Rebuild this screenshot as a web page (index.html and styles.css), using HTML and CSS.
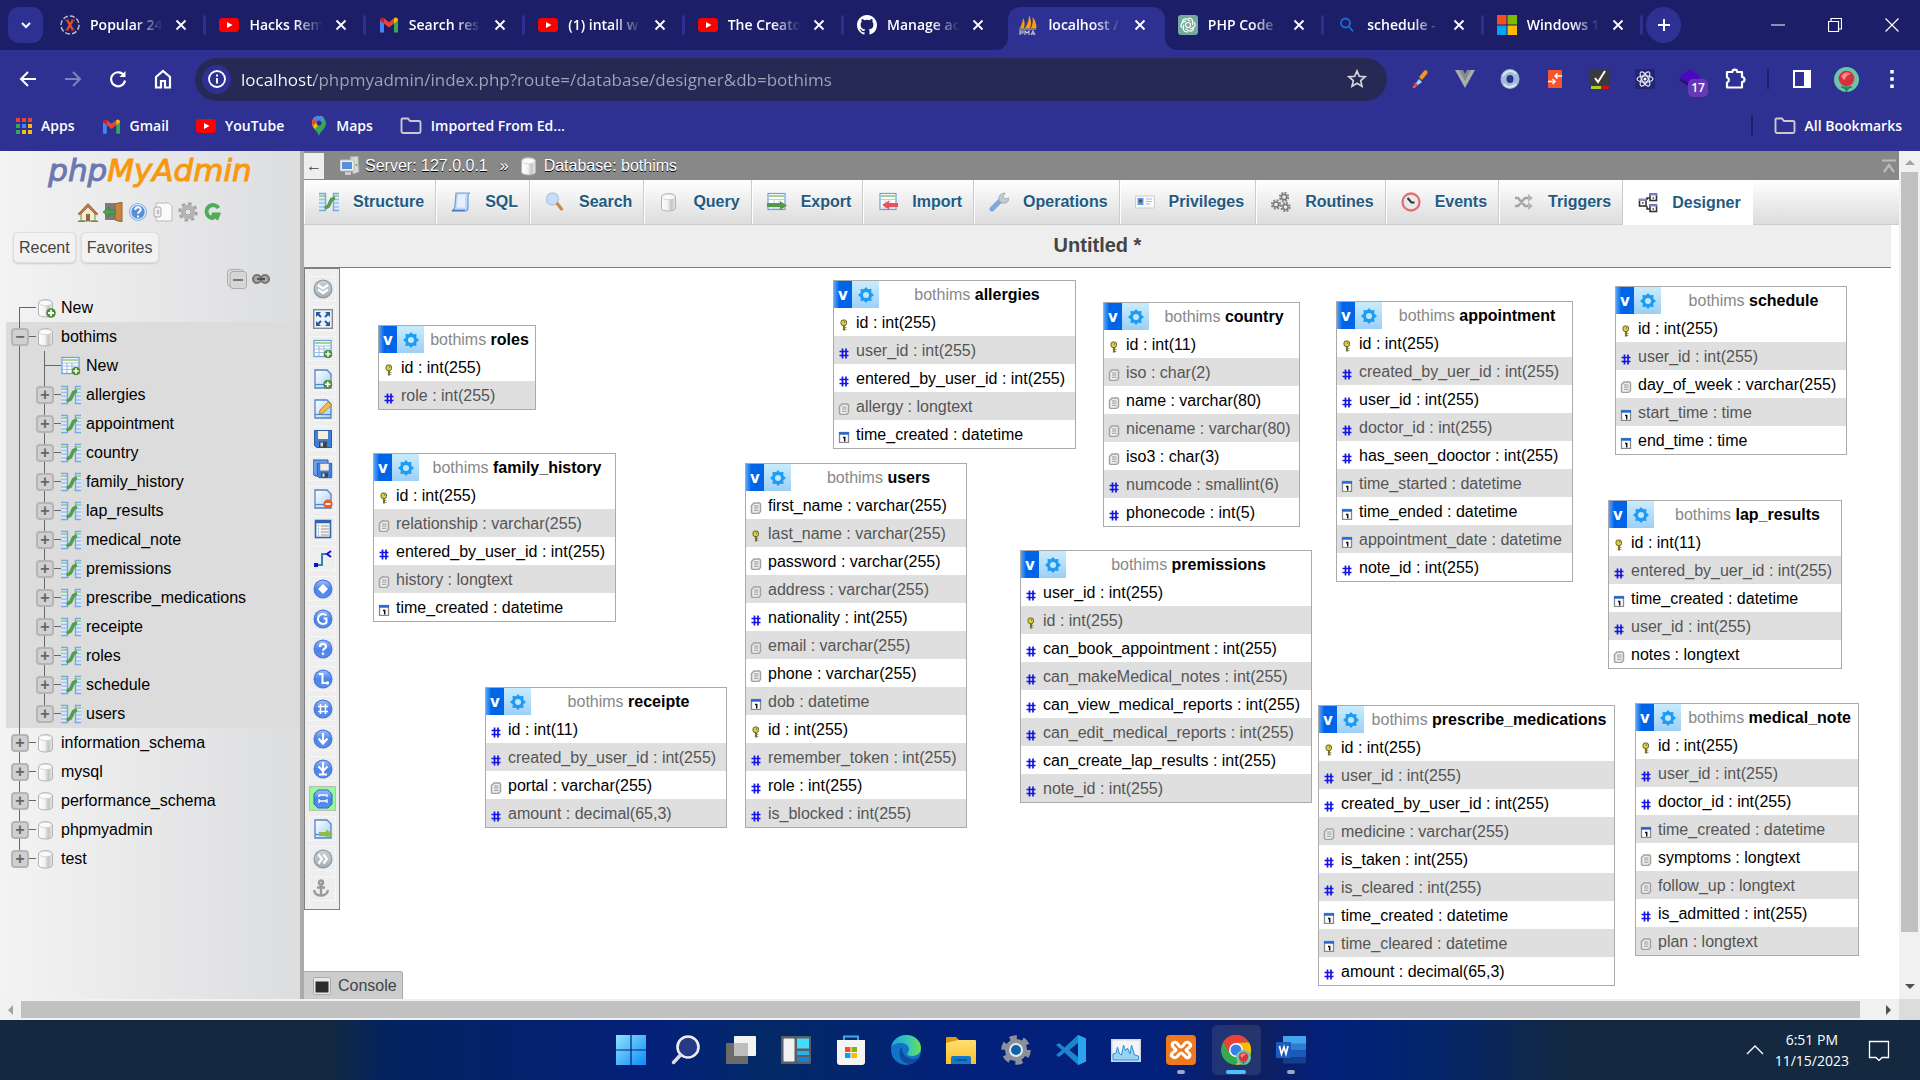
FILE: index.html
```html
<!DOCTYPE html>
<html lang="en">
<head>
<meta charset="utf-8">
<title>localhost / 127.0.0.1 / bothims | phpMyAdmin</title>
<link rel="stylesheet" href="styles.css">
</head>
<body>
<svg class="defs" aria-hidden="true">
  <defs>
    <linearGradient id="g-blue" x1="0" y1="0" x2="0" y2="1"><stop offset="0" stop-color="#9dbdf5"/><stop offset=".5" stop-color="#4b84e8"/><stop offset="1" stop-color="#5b8ff0"/></linearGradient>
    <linearGradient id="g-grey" x1="0" y1="0" x2="0" y2="1"><stop offset="0" stop-color="#c8d2d6"/><stop offset="1" stop-color="#a4b2b8"/></linearGradient>
    <linearGradient id="g-cyl" x1="0" y1="0" x2="1" y2="0"><stop offset="0" stop-color="#fdfdfd"/><stop offset=".45" stop-color="#f2f2f2"/><stop offset=".7" stop-color="#c4c4c4"/><stop offset="1" stop-color="#e9e9e9"/></linearGradient>
    <linearGradient id="g-page" x1="0" y1="0" x2="1" y2="1"><stop offset="0" stop-color="#ffffff"/><stop offset="1" stop-color="#a9cdf4"/></linearGradient>
    <linearGradient id="g-win" x1="0" y1="0" x2="1" y2="1"><stop offset="0" stop-color="#8fe3ff"/><stop offset="1" stop-color="#0a8cf5"/></linearGradient>
    <linearGradient id="g-folder" x1="0" y1="0" x2="0" y2="1"><stop offset="0" stop-color="#ffdf70"/><stop offset="1" stop-color="#fcc02a"/></linearGradient>
    <linearGradient id="g-edge" x1="0" y1="0" x2="1" y2="0"><stop offset="0" stop-color="#1fa3dc"/><stop offset=".6" stop-color="#38c9b4"/><stop offset="1" stop-color="#6be04f"/></linearGradient>
  </defs>
  <symbol id="close" viewBox="0 0 14 14"><path d="M2.500 2.500l9 9M11.500 2.500l-9 9" fill="none" stroke="#fff" stroke-width="1.800"/></symbol>
  <symbol id="youtube" viewBox="0 0 20 20"><rect y="3" width="20" height="14" rx="3.500" fill="#f00"/><path d="M8 7l5.500 3L8 13z" fill="#fff"/></symbol>
  <symbol id="gmail" viewBox="0 0 20 20"><path d="M1 17.500V5l4 3v9.500z" fill="#4285f4"/><path d="M15 17.500V8l4-3v12.500z" fill="#34a853"/><path d="M1 5.500C1 2.500 3.500 2 5 3.200V8.500L1 5.500z" fill="#c5221f"/><path d="M5 3.200l5 4 5-4v5.300l-5 4-5-4z" fill="#ea4335"/><path d="M15 3.200c1.500-1.200 4-.7 4 2.300l-4 3z" fill="#fbbc04"/></symbol>
  <symbol id="xcircle" viewBox="0 0 20 20"><circle cx="10" cy="10" r="9" fill="none" stroke="#b9b9c9" stroke-width="1.500" stroke-dasharray="5 2"/><path d="M7 5l6 10M13 5L7 15" stroke="#e2502c" stroke-width="2.400"/><path d="M5 5h4M11 5h4M5 15h4M11 15h4" stroke="#b33c22" stroke-width="1"/></symbol>
  <symbol id="github" viewBox="0 0 16 16"><path fill="#fff" d="M8 0C3.580 0 0 3.580 0 8c0 3.540 2.290 6.530 5.470 7.590.4.070.55-.17.55-.38 0-.19-.01-.82-.01-1.490-2.010.37-2.530-.49-2.690-.94-.09-.23-.48-.94-.82-1.130-.28-.15-.68-.52-.01-.53.63-.01 1.080.58 1.230.82.72 1.210 1.870.87 2.330.66.070-.52.28-.87.51-1.070-1.780-.2-3.640-.89-3.640-3.950 0-.87.31-1.590.82-2.150-.08-.2-.36-1.020.08-2.120 0 0 .67-.21 2.200.82a7.600 7.600 0 0 1 4 0c1.530-1.040 2.200-.82 2.200-.82.44 1.100.16 1.920.08 2.120.51.56.82 1.270.82 2.150 0 3.070-1.870 3.750-3.650 3.950.29.25.54.73.54 1.480 0 1.070-.01 1.930-.01 2.200 0 .21.15.46.55.38A8.010 8.010 0 0 0 16 8c0-4.420-3.580-8-8-8z"/></symbol>
  <symbol id="pma" viewBox="0 0 20 20"><path d="M2 13C4 9 5 5 5 3c2 3 2 7 1 10zM7 13c3-4 4-9 4-13 2 4 3 9 1 13zM13 13c2-4 2-8 1.500-11 3 3 4 8 4 11z" fill="#f89c0e"/><path d="M1 13h17v2H1z" fill="#8a7a6a"/><path d="M2 20v-4h3v2H2M7 20v-4l2 2 2-2v4M13 20l2-4 2 4M14 19h3" fill="none" stroke="#c9c9d5" stroke-width="1.100"/></symbol>
  <symbol id="gpt" viewBox="0 0 20 20"><rect width="20" height="20" rx="3" fill="#74aa9c"/><g fill="none" stroke="#fff" stroke-width="1.200"><path d="M10 3.500a3 3 0 0 1 4.500 2.300v4.500M15.500 7a3 3 0 0 1 .5 5l-4 2.300M15.500 13a3 3 0 0 1-4 3l-4-2.200M10 16.500a3 3 0 0 1-4.500-2.300V9.700M4.500 13A3 3 0 0 1 4 8l4-2.300M4.500 7a3 3 0 0 1 4-3l4 2.200"/><circle cx="10" cy="10" r="2.500"/></g></symbol>
  <symbol id="find" viewBox="0 0 20 20"><circle cx="8.500" cy="8" r="4.500" fill="none" stroke="#1473d0" stroke-width="1.800"/><path d="M12 11.500l4 5" stroke="#1473d0" stroke-width="2"/></symbol>
  <symbol id="msft" viewBox="0 0 20 20"><path fill="#f25022" d="M0 0h9.500v9.500H0z"/><path fill="#7fba00" d="M10.500 0H20v9.500h-9.500z"/><path fill="#00a4ef" d="M0 10.500h9.500V20H0z"/><path fill="#ffb900" d="M10.500 10.500H20V20h-9.500z"/></symbol>
  <symbol id="folder-o" viewBox="0 0 22 18"><path d="M1.500 2.500a1 1 0 0 1 1-1h5.500l2 2.500h9a1.500 1.500 0 0 1 1.500 1.500v9a1.500 1.500 0 0 1-1.500 1.500h-16a1.500 1.500 0 0 1-1.500-1.500z" fill="none" stroke="#c9c9cf" stroke-width="1.900"/></symbol>
  <symbol id="tulip" viewBox="0 0 24 24"><circle cx="12" cy="12" r="12" fill="#6fc3ab"/><path d="M12 17v7M12 22c-2-3-4-3-5-3M12 22c2-3 4-3 5-3" stroke="#1f8a4a" stroke-width="1.600" fill="none"/><circle cx="12" cy="11" r="7.500" fill="#d8313b"/><path d="M7 9c2-4 7-5 9-2-3 0-5 3-6 6" fill="#f58a90"/></symbol>

  <symbol id="db" viewBox="0 0 20 20"><path d="M2.500 5v11c0 4 14 4 14 0V5c0-4.500-14-4.500-14 0z" fill="url(#g-cyl)" stroke="#b4b4b4"/><ellipse cx="9.500" cy="5" rx="6.500" ry="2.700" fill="#fafafa" stroke="#ccc" stroke-width=".7"/></symbol>
  <symbol id="plus-badge" viewBox="0 0 10 10"><circle cx="5" cy="5" r="4.800" fill="#4c8d34"/><path d="M5 2v6M2 5h6" stroke="#fff" stroke-width="1.800"/></symbol>
  <symbol id="db-new" viewBox="0 0 20 20"><use href="#db" width="20" height="20"/><use href="#plus-badge" x="10" y="10" width="10" height="10"/></symbol>
  <symbol id="grid-new" viewBox="0 0 20 20"><rect x="1" y="1.500" width="17" height="16" fill="#fff" stroke="#6f9fdc" stroke-width="1.300"/><path d="M2 4h15" stroke="#a6d68c" stroke-width="2"/><path d="M2 7h15M2 10h15M2 13.500h15M6 7v10M11 7v10" stroke="#9fc0ea" stroke-width="1.200"/><use href="#plus-badge" x="10.500" y="10.500" width="9" height="9"/></symbol>
  <symbol id="struct" viewBox="0 0 20 20"><rect x="0" y="1" width="7" height="18" fill="#dcebfc"/><rect x="14" y="1" width="6" height="18" fill="#dcebfc"/><path d="M0 4h6M15 4h5" stroke="#8ccb78" stroke-width="1.500"/><path d="M0 1.500h6.500v17H0M20 1.500h-5.500v17h5.500" stroke="#78a6e0" stroke-width="1.400" fill="none"/><path d="M0 7.500h6M0 11h6M0 15h6M15 7.500h5M15 11h5M15 15h5" stroke="#9cc0ec" stroke-width="1.300"/><path d="M7 15.500l2.500-1.500 3-6.500 2-1" stroke="#4fa04a" stroke-width="3.600" fill="none" stroke-linecap="round"/></symbol>
  <symbol id="home" viewBox="0 0 20 20"><path d="M3 11v8h14v-8l-7-7z" fill="#f7ead7" stroke="#7a8a55"/><path d="M0 12L10 1.500 20 12l-2 1L10 5 2 13z" fill="#b9793e" stroke="#8d5727" stroke-width=".6"/><rect x="8" y="12" width="4" height="7" fill="#8a6a4a"/><path d="M0 19.300h7M13 19.300h7" stroke="#5a9a3a" stroke-width="1.500"/></symbol>
  <symbol id="exit" viewBox="0 0 20 20"><rect x="2" y="1" width="15" height="17" fill="#7c7c7c"/><path d="M12 2l7-2v20l-7-2z" fill="#c8853f" stroke="#93602c"/><path d="M0 10l6-5v3h6v4H6v3z" fill="#4fa350" stroke="#2f7a33" stroke-width=".7"/></symbol>
  <symbol id="help" viewBox="0 0 20 20"><circle cx="10" cy="10" r="9" fill="#8fb3e2"/><circle cx="10" cy="10" r="7.300" fill="#5a8fd6" stroke="#dbe8f8" stroke-width="1.300"/><path d="M7.300 8c0-3.600 5.400-3.600 5.400-.3 0 1.900-2.700 2-2.700 4M10 13.500v2" stroke="#fff" stroke-width="1.900" fill="none"/></symbol>
  <symbol id="docs" viewBox="0 0 20 20"><path d="M3 1h13l3 3v15H3z" fill="#fbfbfb" stroke="#bbb"/><rect x="1" y="5" width="7" height="10" rx="2" fill="#eee" stroke="#aaa"/><path d="M5 8v4" stroke="#888"/></symbol>
  <symbol id="gear" viewBox="0 0 20 20"><circle cx="10" cy="10" r="8" fill="none" stroke="#a2a2a2" stroke-width="3.500" stroke-dasharray="3.140 3.140"/><circle cx="10" cy="10" r="5.500" fill="none" stroke="#b4b4b4" stroke-width="4"/><circle cx="10" cy="10" r="3" fill="#e8e8e8" stroke="#999"/></symbol>
  <symbol id="refresh" viewBox="0 0 20 20"><path d="M15.500 6A6.500 6.500 0 1 0 11 16" fill="none" stroke="#52ab58" stroke-width="4"/><path d="M9 10.500h9l-3 8-7-4z" fill="#52ab58"/></symbol>
  <symbol id="collapse" viewBox="0 0 20 20"><rect x=".5" y=".5" width="16" height="17" rx="3" fill="#ddd" stroke="#aaa"/><rect x="3" y="2.500" width="16.500" height="17" rx="3" fill="#d6d6d6" stroke="#aaa"/><path d="M6 11h10" stroke="#777" stroke-width="2"/></symbol>
  <symbol id="chain" viewBox="0 0 20 20"><rect x="2" y="6" width="8" height="8" rx="4" fill="#aaa" stroke="#777" stroke-width="2.200"/><rect x="10" y="6" width="8" height="8" rx="4" fill="#aaa" stroke="#777" stroke-width="2.200"/><path d="M6 10h8" stroke="#555" stroke-width="2.200"/></symbol>
  <symbol id="server" viewBox="0 0 20 20"><path d="M10 1l8-1 1 16-6 2z" fill="#d9d9d9" stroke="#aaa"/><rect x="0" y="4" width="14" height="11" rx="1" fill="#eee" stroke="#bbb"/><rect x="2" y="6" width="10" height="7" fill="#5b8edb"/><path d="M5 17.500h6" stroke="#ccc" stroke-width="3"/><circle cx="16.500" cy="9" r="1" fill="#4b4"/></symbol>
  <symbol id="sql" viewBox="0 0 20 20"><path d="M5 1h14c-2 0-2 2-2 5v8c0 3 0 4-2 5H1c2-1 3-3 3-6z" fill="#bdd8f8" stroke="#6f9fdc" stroke-width="1.200"/><path d="M7 2.500h8l-1 4v9H5.500z" fill="#e6f1fd"/><path d="M1 18.500h13" stroke="#4a7cc0" stroke-width="1.600"/></symbol>
  <symbol id="mag" viewBox="0 0 20 20"><circle cx="7.500" cy="7" r="6" fill="#c4defb" stroke="#b3c6e2" stroke-width="1.500"/><path d="M12.500 12l4 5" stroke="#c98a45" stroke-width="3.200" stroke-linecap="round"/></symbol>
  <symbol id="export" viewBox="0 0 20 20"><rect x="1" y="1.500" width="17" height="16" fill="#fff" stroke="#6f9fdc" stroke-width="1.200"/><path d="M2 4h15" stroke="#a6d68c" stroke-width="2"/><path d="M2 7.500h15M2 16h15M7 8v9M12 8v9" stroke="#b4cdee"/><path d="M0 11h13V9l7 4.500-7 4.500v-3H0z" fill="#55984a"/></symbol>
  <symbol id="import" viewBox="0 0 20 20"><rect x="2" y="1.500" width="16" height="16" fill="#fff" stroke="#6f9fdc" stroke-width="1.200"/><path d="M3 4h14" stroke="#a6d68c" stroke-width="2"/><path d="M3 7.500h14M3 16h14M7 8v9M12 8v9" stroke="#b4cdee"/><path d="M20 11h-9V8.500L4 13l7 4.500V15h9z" fill="#e8525c"/></symbol>
  <symbol id="wrench" viewBox="0 0 20 20"><path d="M3 17L12 8" stroke="#7fa6e4" stroke-width="5" stroke-linecap="round"/><path d="M10 9c-1-5 2-8 6-8l-2 4 2 2 4-1c0 4-3 6-7 5z" fill="#c4cad3" stroke="#969ca6" stroke-width=".7"/></symbol>
  <symbol id="card" viewBox="0 0 20 20"><rect x=".5" y="4" width="19" height="12" rx="1" fill="#fafafa" stroke="#ccc"/><rect x="2.500" y="6" width="6" height="7" fill="#5d9be4"/><circle cx="5.500" cy="9" r="1.800" fill="#7a4d2a"/><path d="M11 7h6M11 9.500h6M11 12h4" stroke="#9dc0ec"/></symbol>
  <symbol id="cogs" viewBox="0 0 20 20"><g fill="none" stroke="#888" stroke-width="2" stroke-dasharray="2 1.300"><circle cx="13" cy="5" r="4.200"/><circle cx="5" cy="12.500" r="4.200"/><circle cx="14.500" cy="15" r="4.200"/></g><g fill="#eee" stroke="#777" stroke-width="1.500"><circle cx="13" cy="5" r="2.600"/><circle cx="5" cy="12.500" r="2.600"/><circle cx="14.500" cy="15" r="2.600"/></g></symbol>
  <symbol id="clock" viewBox="0 0 20 20"><circle cx="10" cy="10" r="8.500" fill="#e9e9e9" stroke="#e27070" stroke-width="2.300"/><path d="M6.500 6l4 4.500h3" stroke="#333" stroke-width="2" fill="none"/></symbol>
  <symbol id="trigger" viewBox="0 0 20 20"><path d="M1 6h3l7 8h4M1 14h3l7-8h4" stroke="#a5a5a5" stroke-width="2.600" fill="none"/><path d="M14 2l5 4-5 4zM14 10l5 4-5 4z" fill="#b5b5b5"/></symbol>
  <symbol id="design" viewBox="0 0 20 20"><path d="M9 7V5h3M9 13v3h3" stroke="#333" stroke-width="1.500" fill="none"/><g fill="#fff" stroke="#333" stroke-width="1.600"><rect x="1.500" y="6.500" width="6.500" height="6.500"/><rect x="12" y="1" width="6.500" height="6.500"/><rect x="12" y="12" width="6.500" height="6.500"/></g><path d="M11.500 1.500h7.500M1 7h7.500M11.500 12.500h7.500" stroke="#8088e0" stroke-width="2.200"/><path d="M4 10h1.500M14.500 5H16M14.500 16H16" stroke="#333" stroke-width="1.500"/></symbol>

  <symbol id="ball" viewBox="0 0 20 20"><circle cx="10" cy="10" r="9.500" fill="#4a78dc"/><circle cx="10" cy="10" r="8.300" fill="url(#g-blue)"/></symbol>
  <symbol id="gball" viewBox="0 0 20 20"><circle cx="10" cy="10" r="9.500" fill="#8b9ba1"/><circle cx="10" cy="10" r="8.300" fill="url(#g-grey)"/></symbol>
  <symbol id="t-more" viewBox="0 0 20 20"><use href="#gball"/><path d="M5 6l5 3.500L15 6M5 10.500l5 3.500 5-3.500" fill="none" stroke="#fff" stroke-width="2.300"/></symbol>
  <symbol id="t-full" viewBox="0 0 20 20"><rect x=".7" y=".7" width="18.600" height="18.600" fill="#eaf2fb" stroke="#8a8a8a" stroke-width="1.400"/><path d="M3 3h5L3 8zM17 3h-5l5 5zM3 17h5l-5-5zM17 17h-5l5-5z" fill="#24589e"/><path d="M5 5l3 3M15 5l-3 3M5 15l3-3M15 15l-3-3" stroke="#24589e" stroke-width="2"/></symbol>
  <symbol id="page" viewBox="0 0 20 20"><path d="M2 1h12l4 4v14H2z" fill="url(#g-page)" stroke="#4f86c6" stroke-width="1.300"/><path d="M2 15.500h16" stroke="#4f86c6" stroke-width="1.200"/></symbol>
  <symbol id="t-new" viewBox="0 0 20 20"><use href="#page"/><use href="#plus-badge" x="10" y="10.500" width="9.500" height="9.500"/></symbol>
  <symbol id="t-edit" viewBox="0 0 20 20"><use href="#page"/><path d="M6 15l1-4 8-8 4 3-9 8z" fill="#f2bb4b" stroke="#b07a2a" stroke-width=".8"/></symbol>
  <symbol id="t-save" viewBox="0 0 20 20"><path d="M1.500 1.500h17v17h-15l-2-2z" fill="#3f7fd8" stroke="#2a5ba8"/><rect x="5" y="2" width="10" height="8" fill="#f6efdc"/><rect x="6" y="12.500" width="8" height="6" fill="#3a4756"/><rect x="7.500" y="13.500" width="2.500" height="4" fill="#cfd8e0"/></symbol>
  <symbol id="t-saveas" viewBox="0 0 20 20"><path d="M0 1h15v16H2l-2-2z" fill="#6ba0ea" stroke="#2a5ba8"/><use href="#t-save" x="3" y="3" width="17" height="17"/></symbol>
  <symbol id="t-del" viewBox="0 0 20 20"><use href="#page"/><circle cx="15" cy="15" r="4.600" fill="#e2602c"/><path d="M12.500 15h5" stroke="#fff" stroke-width="1.800"/></symbol>
  <symbol id="t-list" viewBox="0 0 20 20"><rect x="2.500" y="1.500" width="15" height="17" fill="#f5f5f0" stroke="#2f66b0" stroke-width="1.600"/><path d="M2 3h16" stroke="#2f66b0" stroke-width="2.500"/><path d="M8 7h8M8 10h8M8 13h8M8 16h8" stroke="#999"/><path d="M5 7h1M5 10h1M5 13h1M5 16h1" stroke="#4a86d0"/></symbol>
  <symbol id="t-rel" viewBox="0 0 20 20"><path d="M3 16h6V5h6" fill="none" stroke="#2f86b4" stroke-width="2"/><rect x="1" y="14" width="4" height="4" fill="#11c"/><path d="M18 2l-4 3 4 3" fill="none" stroke="#11c" stroke-width="2"/></symbol>
  <symbol id="t-fk" viewBox="0 0 20 20"><use href="#ball"/><path d="M10 5l5 5-5 5-5-5z" fill="#fff"/></symbol>
  <symbol id="t-reload" viewBox="0 0 20 20"><use href="#ball"/><path d="M13.500 6.500a5 5 0 1 0 0 7v-4h-3" fill="none" stroke="#fff" stroke-width="2"/></symbol>
  <symbol id="t-help" viewBox="0 0 20 20"><use href="#ball"/><path d="M7 8c0-4 6-4 6-.3 0 2-3 2-3 4M10 13.500v2.200" stroke="#fff" stroke-width="2.200" fill="none"/></symbol>
  <symbol id="t-ang" viewBox="0 0 20 20"><use href="#ball"/><path d="M6 5h3.500v9H14" stroke="#fff" stroke-width="2" fill="none"/><circle cx="14.500" cy="14" r="1.700" fill="#fff"/></symbol>
  <symbol id="t-snap" viewBox="0 0 20 20"><use href="#ball"/><path d="M7.500 5v10M12.500 5v10M5 7.500h10M5 12.500h10" stroke="#fff" stroke-width="1.600"/></symbol>
  <symbol id="t-down" viewBox="0 0 20 20"><use href="#ball"/><path d="M10 4v10M5.500 9.500l4.500 5 4.500-5" stroke="#fff" stroke-width="2.200" fill="none"/></symbol>
  <symbol id="t-down2" viewBox="0 0 20 20"><use href="#ball"/><path d="M10 3v8M5.500 7.500l4.500 4.500 4.500-4.500M6 15.500h8M10 11v4" stroke="#fff" stroke-width="2.200" fill="none"/></symbol>
  <symbol id="t-text" viewBox="0 0 20 20"><path d="M5 1h10l4 4v10l-4 4H5l-4-4V5z" fill="url(#g-blue)" stroke="#3564c0"/><path d="M6 8V6h8v2M6 12h8M6 10v4M14 10v4" stroke="#fff" stroke-width="1.300" fill="none"/></symbol>
  <symbol id="t-export" viewBox="0 0 20 20"><use href="#page"/><path d="M6 13h7v-2.500l7 4.500-7 4.500V17H6z" fill="#8fb94a"/></symbol>
  <symbol id="t-right" viewBox="0 0 20 20"><use href="#gball"/><path d="M5.500 5.500L9 10l-3.500 4.500M10.500 5.500L14 10l-3.500 4.500" fill="none" stroke="#fff" stroke-width="2.200"/></symbol>
  <symbol id="t-anchor" viewBox="0 0 20 20"><g fill="none" stroke="#999" stroke-width="2.400"><circle cx="8" cy="3.500" r="2"/><path d="M8 5.500V17M4 8.500h8M1 11c1 7.500 13 7.500 14 0"/></g></symbol>

  <symbol id="key" viewBox="0 0 12 12"><rect x="3" y="1" width="5.500" height="5.500" rx="2" fill="#d8cf3a" stroke="#66642a"/><path d="M6 6.500v5" stroke="#77742a" stroke-width="2.200"/><path d="M7 8.500h1.500M7 10.500h1.500" stroke="#999"/><path d="M6 3h1" stroke="#444"/></symbol>
  <symbol id="num" viewBox="0 0 12 12"><path d="M4.500 1.500v10M8 1.500v10M1.500 4.500h9M1.500 8.500h9" stroke="#1414e6" stroke-width="1.700"/></symbol>
  <symbol id="txt" viewBox="0 0 12 12"><path d="M4 1h5.500l1 1v7.500L8.500 11.500h-6l-1-1V3.500z" fill="#eee" stroke="#a2a2a2" stroke-width="1.500"/><path d="M4 4h4.500M4 6h4.500M4 8.300h4.500" stroke="#999"/></symbol>
  <symbol id="date" viewBox="0 0 12 12"><rect x="1.500" y="1.500" width="9" height="10" fill="#fff" stroke="#888" stroke-width="1.300"/><path d="M1 2.500h10" stroke="#1f66dc" stroke-width="2.400"/><path d="M5 6.500h1.700v4" stroke="#111" stroke-width="1.500" fill="none"/></symbol>
  <symbol id="cog" viewBox="0 0 16 16"><path d="M8 0l2 2.300 3.500-.3-.3 3.500L16 8l-2.800 2.500.3 3.500-3.500-.3L8 16l-2-2.300-3.500.3.300-3.500L0 8l2.800-2.500L2.500 2l3.500.3z" fill="#1e9bf2"/><circle cx="8" cy="8" r="3" fill="#bfe6fb"/></symbol>
</svg>

<header class="browser">
  <div class="tabstrip">
    <button class="tab-search" aria-label="Search tabs"><svg width="14" height="14" viewBox="0 0 14 14"><path d="M3 5l4 4 4-4" fill="none" stroke="#fff" stroke-width="2"/></svg></button>
    <div class="tabs" role="tablist">
      <div class="tab" role="tab"><svg class="i20"><use href="#xcircle"/></svg><span>Popular 24</span><button aria-label="Close"><svg><use href="#close"/></svg></button></div>
      <div class="tab" role="tab"><svg class="i20"><use href="#youtube"/></svg><span>Hacks Rem</span><button aria-label="Close"><svg><use href="#close"/></svg></button></div>
      <div class="tab" role="tab"><svg class="i20"><use href="#gmail"/></svg><span>Search res</span><button aria-label="Close"><svg><use href="#close"/></svg></button></div>
      <div class="tab" role="tab"><svg class="i20"><use href="#youtube"/></svg><span>(1) intall w</span><button aria-label="Close"><svg><use href="#close"/></svg></button></div>
      <div class="tab" role="tab"><svg class="i20"><use href="#youtube"/></svg><span>The Creato</span><button aria-label="Close"><svg><use href="#close"/></svg></button></div>
      <div class="tab nosep" role="tab"><svg class="i20"><use href="#github"/></svg><span>Manage ac</span><button aria-label="Close"><svg><use href="#close"/></svg></button></div>
      <div class="tab active nosep" role="tab" aria-selected="true"><svg class="i20"><use href="#pma"/></svg><span>localhost /</span><button aria-label="Close"><svg><use href="#close"/></svg></button></div>
      <div class="tab" role="tab"><svg class="i20"><use href="#gpt"/></svg><span>PHP Code</span><button aria-label="Close"><svg><use href="#close"/></svg></button></div>
      <div class="tab" role="tab"><svg class="i20"><use href="#find"/></svg><span>schedule -</span><button aria-label="Close"><svg><use href="#close"/></svg></button></div>
      <div class="tab" role="tab"><svg class="i20"><use href="#msft"/></svg><span>Windows 1</span><button aria-label="Close"><svg><use href="#close"/></svg></button></div>
    </div>
    <button class="tab-new" aria-label="New tab"><svg width="14" height="14" viewBox="0 0 14 14"><path d="M7 1v12M1 7h12" stroke="#fff" stroke-width="2"/></svg></button>
    <div class="winctl">
      <button aria-label="Minimize"><svg width="14" height="14" viewBox="0 0 14 14"><path d="M0 7h14" stroke="#fff"/></svg></button>
      <button aria-label="Restore"><svg width="14" height="14" viewBox="0 0 14 14"><path d="M.5 3.500h10v10H.5zM3 3V.5h10.500V11H11" fill="none" stroke="#fff" stroke-width="1.200"/></svg></button>
      <button aria-label="Close window"><svg width="14" height="14" viewBox="0 0 14 14"><path d="M.5.5l13 13M13.500.5l-13 13" stroke="#fff" stroke-width="1.200"/></svg></button>
    </div>
  </div>

  <div class="toolbar">
    <nav class="navbtns">
      <button aria-label="Back"><svg width="20" height="20" viewBox="0 0 20 20"><path d="M10 3l-7 7 7 7M3 10h15" fill="none" stroke="#fff" stroke-width="2"/></svg></button>
      <button aria-label="Forward"><svg width="20" height="20" viewBox="0 0 20 20"><path d="M10 3l7 7-7 7M17 10H2" fill="none" stroke="#7f81c2" stroke-width="2"/></svg></button>
      <button aria-label="Reload"><svg width="20" height="20" viewBox="0 0 20 20"><path d="M16 6.500a7 7 0 1 0 1 5" fill="none" stroke="#fff" stroke-width="2.200"/><path d="M17.500 2v6h-6z" fill="#fff"/></svg></button>
      <button aria-label="Home"><svg width="20" height="20" viewBox="0 0 20 20"><path d="M3 8l7-6 7 6v10.500h-5V12H8v6.500H3z" fill="none" stroke="#fff" stroke-width="2.200"/></svg></button>
    </nav>
    <div class="omnibox">
      <button class="info" aria-label="Site information"><svg width="20" height="20" viewBox="0 0 20 20"><circle cx="10" cy="10" r="8" fill="none" stroke="#fff" stroke-width="1.800"/><path d="M10 9v5.500M10 5.500v2" stroke="#fff" stroke-width="2"/></svg></button>
      <input type="text" aria-label="Address" value="localhost/phpmyadmin/index.php?route=/database/designer&amp;db=bothims">
      <button aria-label="Bookmark this tab"><svg width="20" height="20" viewBox="0 0 20 20"><path d="M10 2l2.300 5.300 5.700.5-4.300 3.800 1.300 5.700-5-3-5 3 1.300-5.700L2 7.800l5.700-.5z" fill="none" stroke="#d5d5dd" stroke-width="1.700"/></svg></button>
    </div>
    <div class="exts">
      <button aria-label="Color picker"><svg width="20" height="20" viewBox="0 0 20 20"><path d="M3 18l6-8 3 3-8 6z" fill="#9fd4f5"/><path d="M2 19l3-6 3 3z" fill="#e8343c"/><path d="M9 8l5-6c2-2 5 1 3 3l-5 6z" fill="#f49a12"/></svg></button>
      <button aria-label="Vue devtools"><svg width="20" height="20" viewBox="0 0 20 20"><path d="M0 1h5l5 9 5-9h5L10 19z" fill="#a9adaf"/><path d="M4 1h4l2 4 2-4h4l-6 11z" fill="#878b90"/></svg></button>
      <button aria-label="Session"><svg width="20" height="20" viewBox="0 0 20 20"><ellipse cx="10" cy="10" rx="6.500" ry="7" fill="none" stroke="#9fbcd6" stroke-width="6"/><path d="M3 7c3-6 10-6 13-2M4 15c3 4 8 4 12 0" stroke="#dbe8f2" stroke-width="1.800" fill="none"/></svg></button>
      <button aria-label="Redirects"><svg width="20" height="20" viewBox="0 0 20 20"><rect x="3" y="1" width="14" height="18" rx="1" fill="#f6552c"/><path d="M10 7h7M12.500 4.500L10 7l2.500 2.500M3 12.500h7M7.500 10l2.500 2.500L7.500 15" stroke="#fff" stroke-width="1.500" fill="none"/></svg></button>
      <button aria-label="Checker"><svg width="20" height="20" viewBox="0 0 20 20"><rect width="20" height="16" rx="2" fill="#3a3a3a"/><path d="M5 9l3 4 7-11" stroke="#fff" stroke-width="2" fill="none"/><path d="M1 17h10v3H1z" fill="#a6d21a"/><path d="M11 17h8v3h-8z" fill="#c3161c"/></svg></button>
      <button aria-label="React devtools"><svg width="20" height="20" viewBox="0 0 20 20"><rect width="20" height="20" rx="2" fill="#22256f"/><g fill="none" stroke="#e5e5f5" stroke-width="1.200"><ellipse cx="10" cy="10" rx="8" ry="3.200"/><ellipse cx="10" cy="10" rx="8" ry="3.200" transform="rotate(60 10 10)"/><ellipse cx="10" cy="10" rx="8" ry="3.200" transform="rotate(120 10 10)"/></g><circle cx="10" cy="10" r="1.500" fill="#fff"/></svg></button>
      <button class="badged" aria-label="Extension, 17 items"><svg width="22" height="20" viewBox="0 0 22 20"><path d="M11 4l11 7-11 7L0 11z" fill="#2a0f78"/><path d="M11 0l11 8-11 7L0 8z" fill="#4b06c0"/></svg><span class="badge">17</span></button>
      <button aria-label="Extensions"><svg width="22" height="22" viewBox="0 0 22 22"><path d="M3 4h5.500a2.300 2.300 0 0 1 4.600 0H18v5a2.300 2.300 0 0 1 0 5v5.500H3V14.500a2.600 2.600 0 0 0 0-5z" fill="none" stroke="#fff" stroke-width="2.200" stroke-linejoin="round"/></svg></button>
      <i class="vsep"></i>
      <button aria-label="Side panel"><svg width="20" height="20" viewBox="0 0 20 20"><path d="M2 2h16v16H2z" fill="none" stroke="#fff" stroke-width="2"/><path d="M12 2h6v16h-6z" fill="#fff"/></svg></button>
      <button aria-label="Profile"><svg width="25" height="25"><use href="#tulip"/></svg></button>
      <button aria-label="Menu"><svg width="20" height="20" viewBox="0 0 20 20"><path d="M10 1v3.500M10 8.200v3.500M10 15.500V19" stroke="#fff" stroke-width="3.500"/></svg></button>
    </div>
  </div>

  <nav class="bookmarks">
    <a href="#"><svg width="16" height="16" viewBox="0 0 16 16"><path d="M0 0h4v4H0zM6 0h4v4H6zM12 0h4v4h-4z" fill="#ea4335"/><path d="M0 6h4v4H0zM0 12h4v4H0z" fill="#34a853"/><path d="M6 6h4v4H6z" fill="#4285f4"/><path d="M12 6h4v4h-4zM6 12h4v4H6zM12 12h4v4h-4z" fill="#fbbc04"/></svg>Apps</a>
    <a href="#"><svg width="19" height="19"><use href="#gmail"/></svg>Gmail</a>
    <a href="#"><svg width="20" height="20"><use href="#youtube"/></svg>YouTube</a>
    <a href="#"><svg width="16" height="20" viewBox="0 0 16 20"><path d="M8 20C7 15 1 13 1 7a7 7 0 0 1 14 0c0 6-6 8-7 13z" fill="#34a853"/><path d="M1 7a7 7 0 0 1 12-5L4 13C2 11 1 9 1 7z" fill="#fbbc04"/><path d="M2.500 2.500A7 7 0 0 1 13 2.200L8 8z" fill="#4285f4"/><path d="M2.500 2.500L6 5.500 2 10C.5 7 1 4 2.500 2.500z" fill="#ea4335"/><circle cx="8" cy="7" r="2.500" fill="#2e3192"/></svg>Maps</a>
    <a href="#"><svg width="22" height="18"><use href="#folder-o"/></svg>Imported From Ed...</a>
    <i class="vsep push"></i>
    <a href="#"><svg width="22" height="18"><use href="#folder-o"/></svg>All Bookmarks</a>
  </nav>
</header>

<div class="viewport">
  <div class="page">
    <aside class="sidebar">
      <a class="logo" href="#"><span>php</span>MyAdmin</a>
      <nav class="quick">
        <a href="#" aria-label="Home"><svg class="i20"><use href="#home"/></svg></a>
        <a href="#" aria-label="Log out"><svg class="i20"><use href="#exit"/></svg></a>
        <a href="#" aria-label="Documentation"><svg class="i20"><use href="#help"/></svg></a>
        <a href="#" aria-label="Manual"><svg class="i20"><use href="#docs"/></svg></a>
        <a href="#" aria-label="Settings"><svg class="i20"><use href="#gear"/></svg></a>
        <a href="#" aria-label="Reload"><svg class="i20"><use href="#refresh"/></svg></a>
      </nav>
      <div class="recent"><button>Recent</button><button>Favorites</button></div>
      <div class="treectl"><a href="#" aria-label="Collapse all"><svg class="i20"><use href="#collapse"/></svg></a><a href="#" aria-label="Link with main panel"><svg class="i20"><use href="#chain"/></svg></a></div>
      <ul class="tree">
        <li><div class="node"><i class="rail first"></i><svg class="i20"><use href="#db-new"/></svg><a href="#">New</a></div></li>
        <li class="open"><div class="node"><i class="rail"><button aria-label="Collapse">−</button></i><svg class="i20"><use href="#db"/></svg><a href="#">bothims</a></div>
          <ul>
            <li class="node"><i class="line"></i><i class="rail"></i><svg class="i20"><use href="#grid-new"/></svg><a href="#">New</a></li>
            <li class="node"><i class="line"></i><i class="rail"><button aria-label="Expand">+</button></i><svg class="i20"><use href="#struct"/></svg><a href="#">allergies</a></li>
            <li class="node"><i class="line"></i><i class="rail"><button aria-label="Expand">+</button></i><svg class="i20"><use href="#struct"/></svg><a href="#">appointment</a></li>
            <li class="node"><i class="line"></i><i class="rail"><button aria-label="Expand">+</button></i><svg class="i20"><use href="#struct"/></svg><a href="#">country</a></li>
            <li class="node"><i class="line"></i><i class="rail"><button aria-label="Expand">+</button></i><svg class="i20"><use href="#struct"/></svg><a href="#">family_history</a></li>
            <li class="node"><i class="line"></i><i class="rail"><button aria-label="Expand">+</button></i><svg class="i20"><use href="#struct"/></svg><a href="#">lap_results</a></li>
            <li class="node"><i class="line"></i><i class="rail"><button aria-label="Expand">+</button></i><svg class="i20"><use href="#struct"/></svg><a href="#">medical_note</a></li>
            <li class="node"><i class="line"></i><i class="rail"><button aria-label="Expand">+</button></i><svg class="i20"><use href="#struct"/></svg><a href="#">premissions</a></li>
            <li class="node"><i class="line"></i><i class="rail"><button aria-label="Expand">+</button></i><svg class="i20"><use href="#struct"/></svg><a href="#">prescribe_medications</a></li>
            <li class="node"><i class="line"></i><i class="rail"><button aria-label="Expand">+</button></i><svg class="i20"><use href="#struct"/></svg><a href="#">receipte</a></li>
            <li class="node"><i class="line"></i><i class="rail"><button aria-label="Expand">+</button></i><svg class="i20"><use href="#struct"/></svg><a href="#">roles</a></li>
            <li class="node"><i class="line"></i><i class="rail"><button aria-label="Expand">+</button></i><svg class="i20"><use href="#struct"/></svg><a href="#">schedule</a></li>
            <li class="node"><i class="line"></i><i class="rail last"><button aria-label="Expand">+</button></i><svg class="i20"><use href="#struct"/></svg><a href="#">users</a></li>
          </ul>
        </li>
        <li><div class="node"><i class="rail"><button aria-label="Expand">+</button></i><svg class="i20"><use href="#db"/></svg><a href="#">information_schema</a></div></li>
        <li><div class="node"><i class="rail"><button aria-label="Expand">+</button></i><svg class="i20"><use href="#db"/></svg><a href="#">mysql</a></div></li>
        <li><div class="node"><i class="rail"><button aria-label="Expand">+</button></i><svg class="i20"><use href="#db"/></svg><a href="#">performance_schema</a></div></li>
        <li><div class="node"><i class="rail"><button aria-label="Expand">+</button></i><svg class="i20"><use href="#db"/></svg><a href="#">phpmyadmin</a></div></li>
        <li><div class="node"><i class="rail last"><button aria-label="Expand">+</button></i><svg class="i20"><use href="#db"/></svg><a href="#">test</a></div></li>
      </ul>
    </aside>

    <main class="main">
      <div class="crumbs">
        <button class="hide" aria-label="Hide panel">←</button>
        <svg class="i20"><use href="#server"/></svg><a href="#">Server: 127.0.0.1</a><span class="raquo">»</span><svg class="i20"><use href="#db"/></svg><a href="#">Database: bothims</a>
        <a class="top" href="#" aria-label="Page settings"><svg width="16" height="14" viewBox="0 0 16 14"><path d="M1 1.500h14M3 13l5-7 5 7" fill="none" stroke="#bbb" stroke-width="2.200"/></svg></a>
      </div>
      <nav class="topmenu">
        <a href="#"><svg class="i20"><use href="#struct"/></svg>Structure</a>
        <a href="#"><svg class="i20"><use href="#sql"/></svg>SQL</a>
        <a href="#"><svg class="i20"><use href="#mag"/></svg>Search</a>
        <a href="#"><svg class="i20"><use href="#db"/></svg>Query</a>
        <a href="#"><svg class="i20"><use href="#export"/></svg>Export</a>
        <a href="#"><svg class="i20"><use href="#import"/></svg>Import</a>
        <a href="#"><svg class="i20"><use href="#wrench"/></svg>Operations</a>
        <a href="#"><svg class="i20"><use href="#card"/></svg>Privileges</a>
        <a href="#"><svg class="i20"><use href="#cogs"/></svg>Routines</a>
        <a href="#"><svg class="i20"><use href="#clock"/></svg>Events</a>
        <a href="#"><svg class="i20"><use href="#trigger"/></svg>Triggers</a>
        <a href="#" class="current"><svg class="i20"><use href="#design"/></svg>Designer</a>
      </nav>
      <h1 class="pagename">Untitled *</h1>
      <div class="designer">
        <div class="tools">
          <button aria-label="Show/Hide tables list"><svg class="i20"><use href="#t-more"/></svg></button>
          <button aria-label="View in fullscreen"><svg class="i20"><use href="#t-full"/></svg></button>
          <button aria-label="Add tables"><svg class="i20"><use href="#grid-new"/></svg></button>
          <button aria-label="New page"><svg class="i20"><use href="#t-new"/></svg></button>
          <button aria-label="Open page"><svg class="i20"><use href="#t-edit"/></svg></button>
          <button aria-label="Save page"><svg class="i20"><use href="#t-save"/></svg></button>
          <button aria-label="Save page as"><svg class="i20"><use href="#t-saveas"/></svg></button>
          <button aria-label="Delete pages"><svg class="i20"><use href="#t-del"/></svg></button>
          <button aria-label="Create table"><svg class="i20"><use href="#t-list"/></svg></button>
          <button aria-label="Create relationship"><svg class="i20"><use href="#t-rel"/></svg></button>
          <button aria-label="Choose column to display"><svg class="i20"><use href="#t-fk"/></svg></button>
          <button aria-label="Reload"><svg class="i20"><use href="#t-reload"/></svg></button>
          <button aria-label="Help"><svg class="i20"><use href="#t-help"/></svg></button>
          <button aria-label="Angular links"><svg class="i20"><use href="#t-ang"/></svg></button>
          <button aria-label="Snap to grid"><svg class="i20"><use href="#t-snap"/></svg></button>
          <button aria-label="Small/Big all"><svg class="i20"><use href="#t-down"/></svg></button>
          <button aria-label="Toggle small/big"><svg class="i20"><use href="#t-down2"/></svg></button>
          <button class="on" aria-label="Toggle relationship lines"><svg class="i20"><use href="#t-text"/></svg></button>
          <button aria-label="Export schema"><svg class="i20"><use href="#t-export"/></svg></button>
          <button aria-label="Move menu"><svg class="i20"><use href="#t-right"/></svg></button>
          <button aria-label="Pin text"><svg class="i20"><use href="#t-anchor"/></svg></button>
        </div>

        <table class="ent roles"><thead><tr><th><button class="v">v</button><button class="c" aria-label="Options"><svg><use href="#cog"/></svg></button><span>bothims <b>roles</b></span></th></tr></thead><tbody>
          <tr><td><svg><use href="#key"/></svg>id : int(255)</td></tr>
          <tr><td><svg><use href="#num"/></svg>role : int(255)</td></tr></tbody></table>

        <table class="ent family"><thead><tr><th><button class="v">v</button><button class="c" aria-label="Options"><svg><use href="#cog"/></svg></button><span>bothims <b>family_history</b></span></th></tr></thead><tbody>
          <tr><td><svg><use href="#key"/></svg>id : int(255)</td></tr>
          <tr><td><svg><use href="#txt"/></svg>relationship : varchar(255)</td></tr>
          <tr><td><svg><use href="#num"/></svg>entered_by_user_id : int(255)</td></tr>
          <tr><td><svg><use href="#txt"/></svg>history : longtext</td></tr>
          <tr><td><svg><use href="#date"/></svg>time_created : datetime</td></tr></tbody></table>

        <table class="ent receipte"><thead><tr><th><button class="v">v</button><button class="c" aria-label="Options"><svg><use href="#cog"/></svg></button><span>bothims <b>receipte</b></span></th></tr></thead><tbody>
          <tr><td><svg><use href="#num"/></svg>id : int(11)</td></tr>
          <tr><td><svg><use href="#num"/></svg>created_by_user_id : int(255)</td></tr>
          <tr><td><svg><use href="#txt"/></svg>portal : varchar(255)</td></tr>
          <tr><td><svg><use href="#num"/></svg>amount : decimal(65,3)</td></tr></tbody></table>

        <table class="ent allergies"><thead><tr><th><button class="v">v</button><button class="c" aria-label="Options"><svg><use href="#cog"/></svg></button><span>bothims <b>allergies</b></span></th></tr></thead><tbody>
          <tr><td><svg><use href="#key"/></svg>id : int(255)</td></tr>
          <tr><td><svg><use href="#num"/></svg>user_id : int(255)</td></tr>
          <tr><td><svg><use href="#num"/></svg>entered_by_user_id : int(255)</td></tr>
          <tr><td><svg><use href="#txt"/></svg>allergy : longtext</td></tr>
          <tr><td><svg><use href="#date"/></svg>time_created : datetime</td></tr></tbody></table>

        <table class="ent users"><thead><tr><th><button class="v">v</button><button class="c" aria-label="Options"><svg><use href="#cog"/></svg></button><span>bothims <b>users</b></span></th></tr></thead><tbody>
          <tr><td><svg><use href="#txt"/></svg>first_name : varchar(255)</td></tr>
          <tr><td><svg><use href="#key"/></svg>last_name : varchar(255)</td></tr>
          <tr><td><svg><use href="#txt"/></svg>password : varchar(255)</td></tr>
          <tr><td><svg><use href="#txt"/></svg>address : varchar(255)</td></tr>
          <tr><td><svg><use href="#num"/></svg>nationality : int(255)</td></tr>
          <tr><td><svg><use href="#txt"/></svg>email : varchar(255)</td></tr>
          <tr><td><svg><use href="#txt"/></svg>phone : varchar(255)</td></tr>
          <tr><td><svg><use href="#date"/></svg>dob : datetime</td></tr>
          <tr><td><svg><use href="#key"/></svg>id : int(255)</td></tr>
          <tr><td><svg><use href="#num"/></svg>remember_token : int(255)</td></tr>
          <tr><td><svg><use href="#num"/></svg>role : int(255)</td></tr>
          <tr><td><svg><use href="#num"/></svg>is_blocked : int(255)</td></tr></tbody></table>

        <table class="ent country"><thead><tr><th><button class="v">v</button><button class="c" aria-label="Options"><svg><use href="#cog"/></svg></button><span>bothims <b>country</b></span></th></tr></thead><tbody>
          <tr><td><svg><use href="#key"/></svg>id : int(11)</td></tr>
          <tr><td><svg><use href="#txt"/></svg>iso : char(2)</td></tr>
          <tr><td><svg><use href="#txt"/></svg>name : varchar(80)</td></tr>
          <tr><td><svg><use href="#txt"/></svg>nicename : varchar(80)</td></tr>
          <tr><td><svg><use href="#txt"/></svg>iso3 : char(3)</td></tr>
          <tr><td><svg><use href="#num"/></svg>numcode : smallint(6)</td></tr>
          <tr><td><svg><use href="#num"/></svg>phonecode : int(5)</td></tr></tbody></table>

        <table class="ent premissions"><thead><tr><th><button class="v">v</button><button class="c" aria-label="Options"><svg><use href="#cog"/></svg></button><span>bothims <b>premissions</b></span></th></tr></thead><tbody>
          <tr><td><svg><use href="#num"/></svg>user_id : int(255)</td></tr>
          <tr><td><svg><use href="#key"/></svg>id : int(255)</td></tr>
          <tr><td><svg><use href="#num"/></svg>can_book_appointment : int(255)</td></tr>
          <tr><td><svg><use href="#num"/></svg>can_makeMedical_notes : int(255)</td></tr>
          <tr><td><svg><use href="#num"/></svg>can_view_medical_reports : int(255)</td></tr>
          <tr><td><svg><use href="#num"/></svg>can_edit_medical_reports : int(255)</td></tr>
          <tr><td><svg><use href="#num"/></svg>can_create_lap_results : int(255)</td></tr>
          <tr><td><svg><use href="#num"/></svg>note_id : int(255)</td></tr></tbody></table>

        <table class="ent appointment"><thead><tr><th><button class="v">v</button><button class="c" aria-label="Options"><svg><use href="#cog"/></svg></button><span>bothims <b>appointment</b></span></th></tr></thead><tbody>
          <tr><td><svg><use href="#key"/></svg>id : int(255)</td></tr>
          <tr><td><svg><use href="#num"/></svg>created_by_uer_id : int(255)</td></tr>
          <tr><td><svg><use href="#num"/></svg>user_id : int(255)</td></tr>
          <tr><td><svg><use href="#num"/></svg>doctor_id : int(255)</td></tr>
          <tr><td><svg><use href="#num"/></svg>has_seen_dooctor : int(255)</td></tr>
          <tr><td><svg><use href="#date"/></svg>time_started : datetime</td></tr>
          <tr><td><svg><use href="#date"/></svg>time_ended : datetime</td></tr>
          <tr><td><svg><use href="#date"/></svg>appointment_date : datetime</td></tr>
          <tr><td><svg><use href="#num"/></svg>note_id : int(255)</td></tr></tbody></table>

        <table class="ent schedule"><thead><tr><th><button class="v">v</button><button class="c" aria-label="Options"><svg><use href="#cog"/></svg></button><span>bothims <b>schedule</b></span></th></tr></thead><tbody>
          <tr><td><svg><use href="#key"/></svg>id : int(255)</td></tr>
          <tr><td><svg><use href="#num"/></svg>user_id : int(255)</td></tr>
          <tr><td><svg><use href="#txt"/></svg>day_of_week : varchar(255)</td></tr>
          <tr><td><svg><use href="#date"/></svg>start_time : time</td></tr>
          <tr><td><svg><use href="#date"/></svg>end_time : time</td></tr></tbody></table>

        <table class="ent lap"><thead><tr><th><button class="v">v</button><button class="c" aria-label="Options"><svg><use href="#cog"/></svg></button><span>bothims <b>lap_results</b></span></th></tr></thead><tbody>
          <tr><td><svg><use href="#key"/></svg>id : int(11)</td></tr>
          <tr><td><svg><use href="#num"/></svg>entered_by_uer_id : int(255)</td></tr>
          <tr><td><svg><use href="#date"/></svg>time_created : datetime</td></tr>
          <tr><td><svg><use href="#num"/></svg>user_id : int(255)</td></tr>
          <tr><td><svg><use href="#txt"/></svg>notes : longtext</td></tr></tbody></table>

        <table class="ent prescribe"><thead><tr><th><button class="v">v</button><button class="c" aria-label="Options"><svg><use href="#cog"/></svg></button><span>bothims <b>prescribe_medications</b></span></th></tr></thead><tbody>
          <tr><td><svg><use href="#key"/></svg>id : int(255)</td></tr>
          <tr><td><svg><use href="#num"/></svg>user_id : int(255)</td></tr>
          <tr><td><svg><use href="#num"/></svg>created_by_user_id : int(255)</td></tr>
          <tr><td><svg><use href="#txt"/></svg>medicine : varchar(255)</td></tr>
          <tr><td><svg><use href="#num"/></svg>is_taken : int(255)</td></tr>
          <tr><td><svg><use href="#num"/></svg>is_cleared : int(255)</td></tr>
          <tr><td><svg><use href="#date"/></svg>time_created : datetime</td></tr>
          <tr><td><svg><use href="#date"/></svg>time_cleared : datetime</td></tr>
          <tr><td><svg><use href="#num"/></svg>amount : decimal(65,3)</td></tr></tbody></table>

        <table class="ent note"><thead><tr><th><button class="v">v</button><button class="c" aria-label="Options"><svg><use href="#cog"/></svg></button><span>bothims <b>medical_note</b></span></th></tr></thead><tbody>
          <tr><td><svg><use href="#key"/></svg>id : int(255)</td></tr>
          <tr><td><svg><use href="#num"/></svg>user_id : int(255)</td></tr>
          <tr><td><svg><use href="#num"/></svg>doctor_id : int(255)</td></tr>
          <tr><td><svg><use href="#date"/></svg>time_created : datetime</td></tr>
          <tr><td><svg><use href="#txt"/></svg>symptoms : longtext</td></tr>
          <tr><td><svg><use href="#txt"/></svg>follow_up : longtext</td></tr>
          <tr><td><svg><use href="#num"/></svg>is_admitted : int(255)</td></tr>
          <tr><td><svg><use href="#txt"/></svg>plan : longtext</td></tr></tbody></table>

        <button class="console"><svg width="18" height="18" viewBox="0 0 18 18"><rect x=".5" y=".5" width="17" height="17" rx="1" fill="#e8e8e8" stroke="#aaa"/><path d="M2.500 4.500h13v11h-13z" fill="#2b2b2b"/></svg>Console</button>
      </div>
    </main>
  </div>
  <div class="vbar"><i class="up"></i><i class="thumb"></i><i class="down"></i></div>
  <div class="hbar"><i class="left"></i><i class="thumb"></i><i class="right"></i></div>
  <div class="corner"></div>
</div>

<footer class="taskbar">
  <nav class="apps">
    <button aria-label="Start"><svg viewBox="0 0 30 30"><path d="M0 0h14.400v14.400H0zM15.600 0H30v14.400H15.600zM0 15.600h14.400V30H0zM15.600 15.600H30V30H15.600z" fill="url(#g-win)"/></svg></button>
    <button aria-label="Search"><svg viewBox="0 0 30 30"><circle cx="17" cy="12" r="10.500" fill="#263a86" stroke="#eee" stroke-width="2.600"/><path d="M9.500 20L2.500 27.500" stroke="#ddd" stroke-width="3.500" stroke-linecap="round"/></svg></button>
    <button aria-label="Task view"><svg viewBox="0 0 30 30"><rect y="8" width="22" height="21" rx="1" fill="#6b6b6b"/><rect x="8" y="1" width="22" height="20" rx="1" fill="#f3f3f3"/><rect x="8" y="8" width="14" height="13" fill="#bdbdbd"/></svg></button>
    <button aria-label="Widgets"><svg viewBox="0 0 30 30"><rect y="1" width="30" height="28" rx="1" fill="#5a5f66"/><rect x="2.500" y="3.500" width="11" height="23" rx="1" fill="#f1f1f1"/><rect x="16" y="3.500" width="12" height="10" fill="#44dcff"/><rect x="16" y="16" width="12" height="4" fill="#2bb0ea"/><rect x="16" y="22" width="12" height="4.500" fill="#1684d8"/></svg></button>
    <button aria-label="Store"><svg viewBox="0 0 30 30"><path d="M8 6V1.500h14V6" fill="none" stroke="#3aa9ee" stroke-width="2"/><path d="M1 5h28v22a3 3 0 0 1-3 3H4a3 3 0 0 1-3-3z" fill="#f5f5f5"/><path d="M9 12h5.500v5H9z" fill="#f25022"/><path d="M15.500 12H21v5h-5.500z" fill="#7fba00"/><path d="M9 18h5.500v5H9z" fill="#00a4ef"/><path d="M15.500 18H21v5h-5.500z" fill="#ffb900"/></svg></button>
    <button aria-label="Edge"><svg viewBox="0 0 30 30"><circle cx="15" cy="15" r="15" fill="#1173c9"/><path d="M0 13C1 5 8 0 15 0c9 0 15 6 15 13 0 6-5 8-9 8-3 0-5-1-5-2s2-2 2-5c0-4-4-6-8-6C5 8 1 10 0 13z" fill="url(#g-edge)"/><path d="M11 12c-4 3-4 16 8 17 4-1 8-4 10-7-4 2-9 3-13 0-4-2-5-6-5-10z" fill="#0f4c9c"/></svg></button>
    <button aria-label="File Explorer"><svg viewBox="0 0 30 30"><path d="M0 3a1 1 0 0 1 1-1h9l3 3v6H0z" fill="#dc9a0c"/><path d="M0 8l12-3h17a1 1 0 0 1 1 1v23H0z" fill="url(#g-folder)"/><path d="M5 29v-6a2 2 0 0 1 2-2h16a2 2 0 0 1 2 2v6z" fill="#1378c8"/><path d="M9 25h12" stroke="#0c5797" stroke-width="2"/></svg></button>
    <button aria-label="Settings"><svg viewBox="0 0 30 30"><circle cx="15" cy="15" r="12" fill="none" stroke="#8b9199" stroke-width="5.600" stroke-dasharray="6.800 5.760"/><circle cx="15" cy="15" r="11" fill="#8b9199"/><circle cx="15" cy="15" r="6" fill="#0e62ad" stroke="#e5e8ec" stroke-width="2"/></svg></button>
    <button aria-label="Visual Studio Code"><svg viewBox="0 0 30 30"><path d="M22 0l8 3.500v23L22 30 8.500 17.500 3 22l-3-2 6-5-6-5 3-2 5.500 4.500zM22 8l-8.500 7 8.500 7z" fill="#1a86d0" fill-rule="evenodd"/><path d="M22 0l8 3.500v23L22 30z" fill="#2ba4f0"/></svg></button>
    <button aria-label="Monitor"><svg viewBox="0 0 30 30"><rect y="4" width="30" height="23" fill="#cfd6dd"/><rect x="1.500" y="5.500" width="27" height="20" fill="#f3f6f9"/><path d="M2 25v-6l3-1 1.500-6 2 7 2 1 2-10 2 6 2-3 2.500 6 1.500-9 3 10 4 1v4z" fill="#9cd3f5" stroke="#2d8fd5"/></svg></button>
    <button class="run" aria-label="XAMPP"><svg viewBox="0 0 30 30"><rect width="30" height="30" rx="4" fill="#ee7a1d"/><path d="M7 8c5-3 5 4 8 4s3-7 8-4-3 6-3 7 6 4 3 7-5-4-8-4-3 7-8 4 3-6 3-7-6-4-3-7z" fill="none" stroke="#fff" stroke-width="3.200"/></svg></button>
    <button class="run focus" aria-label="Chrome"><svg viewBox="0 0 30 30"><circle cx="15" cy="15" r="15" fill="#34a853"/><path d="M2 7.500A15 15 0 0 1 28 7.500L15 8 8.900 18.500z" fill="#ea4335"/><path d="M28 7.500A15 15 0 0 1 15 30l6-11.500L15 8z" fill="#fbbc04"/><circle cx="15" cy="15" r="7" fill="#fff"/><circle cx="15" cy="15" r="5.500" fill="#3a7ded"/><use href="#tulip" x="15" y="15" width="15" height="15"/></svg></button>
    <button class="run" aria-label="Word"><svg viewBox="0 0 30 30"><path d="M7 1h23v8H7z" fill="#41a5ee"/><path d="M7 8.500h23v7H7z" fill="#2b7cd3"/><path d="M7 15.500h23v7H7z" fill="#185abd"/><path d="M7 22.500h23v6H7z" fill="#103f91"/><rect y="7" width="15" height="16" rx="1" fill="#1b5cbe"/><path d="M3.500 11l2 8L8 12l2 7 2-8" fill="none" stroke="#fff" stroke-width="1.700"/></svg></button>
  </nav>
  <div class="tray">
    <button aria-label="Show hidden icons"><svg width="18" height="18" viewBox="0 0 18 18"><path d="M1 13l8-8 8 8" fill="none" stroke="#fff" stroke-width="1.300"/></svg></button>
    <time datetime="2023-11-15T18:51">6:51 PM<br>11/15/2023</time>
    <button aria-label="Notifications"><svg width="22" height="22" viewBox="0 0 22 22"><path d="M1.500 2.500h19v16h-6.500L11 21.500l-3-3H1.500z" fill="none" stroke="#fff" stroke-width="1.300"/></svg></button>
  </div>
</footer>
</body>
</html>
```
FILE: styles.css
```css
* { box-sizing: border-box; }
body {
  margin: 0;
  min-height: 100vh;
  display: flex;
  flex-direction: column;
  font: 16px/20px "Liberation Sans", Arial, sans-serif;
  color: #000;
  background: #fff;
}
button, input { font: inherit; color: inherit; margin: 0; padding: 0; border: 0; background: none; }
button { display: flex; align-items: center; justify-content: center; }
a { color: inherit; text-decoration: none; }
svg { display: block; flex: none; }
ul { list-style: none; margin: 0; padding: 0; }
i { display: block; flex: none; }
.defs { position: absolute; width: 0; height: 0; }
.i20 { width: 20px; height: 20px; }

/* Browser frame */
.browser { background: #2e3192; color: #fff; font-family: "Open Sans", "Noto Sans", sans-serif; font-size: 14px; font-weight: 600; }
.tabstrip { display: flex; align-items: center; height: 50px; padding-left: 8px; background: #1c1e68; }
.tab-search { width: 35px; height: 36px; border-radius: 11px; background: #2e3192; flex: none; }
.tabs { display: flex; flex: 1; min-width: 0; margin-left: 4px; align-self: stretch; }
.tab { position: relative; display: flex; flex: 1 1 0; min-width: 0; align-items: center; padding-left: 13px; margin-top: 7px; padding-bottom: 7px; }
.tab span { flex: 1; min-width: 0; margin: 0 10px; white-space: nowrap; -webkit-mask-image: linear-gradient(90deg, #000 60%, transparent 98%); mask-image: linear-gradient(90deg, #000 60%, transparent 98%); }
.tab svg { width: 20px; height: 20px; }
.tab button svg { width: 14px; height: 14px; }
.tab::after { content: ""; width: 3px; height: 20px; margin-left: 15px; border-radius: 2px; background: #2e3192; }
.tab.nosep::after { background: none; }
.tab.active { margin-left: 5px; padding-left: 10px; background: #2e3192; border-radius: 12px 12px 0 0; }
.tab.active::before { content: ""; position: absolute; left: -12px; right: -12px; bottom: 0; height: 12px;
  background:
    radial-gradient(circle at 0 0, transparent 12px, #2e3192 12px) left / 12px 12px no-repeat,
    radial-gradient(circle at 100% 0, transparent 12px, #2e3192 12px) right / 12px 12px no-repeat; }
.tab-new { width: 35px; height: 36px; border-radius: 50%; background: #2e3192; margin-left: 3px; flex: none; }
.winctl { display: flex; flex: none; margin-left: 68px; }
.winctl button { width: 57px; height: 40px; }

.toolbar { display: flex; align-items: center; height: 58px; }
.navbtns { display: flex; flex: none; padding: 0 10px 0 5px; }
.navbtns button { width: 45px; height: 36px; }
.omnibox { display: flex; flex: 1; align-items: center; height: 43px; border-radius: 22px; background: #262953; padding: 0 20px 0 7px; }
.omnibox .info { width: 29px; height: 29px; border-radius: 50%; background: #2e3192; }
.omnibox input { flex: 1; min-width: 0; margin-left: 10px; height: 30px; font-size: 17px; font-weight: 400; outline: 0; color: transparent; background: linear-gradient(90deg, #fff 73px, #a3a4b8 73px); -webkit-background-clip: text; background-clip: text; }
.exts { display: flex; align-items: center; flex: none; padding: 0 6px 0 10px; }
.exts button { width: 45px; height: 36px; position: relative; }
.badge { position: absolute; right: 4px; bottom: 0; width: 20px; height: 18px; border-radius: 5px; background: #6638b6; font-size: 12px; line-height: 18px; text-align: center; }
.vsep { width: 2px; height: 20px; background: #1c1e68; margin: 0 10px; }
.push { margin-left: auto; }

.bookmarks { display: flex; align-items: center; height: 43px; padding: 0 18px 7px 16px; gap: 27px; }
.bookmarks a { display: flex; align-items: center; gap: 9px; }
.bookmarks .vsep { margin-right: -6px; }

/* Page with its scrollbars */
.viewport { flex: 1; display: grid; grid-template-columns: minmax(0, 1fr) 21px; grid-template-rows: 1fr 21px; }
.page { display: flex; min-width: 0; }
.vbar { display: flex; flex-direction: column; align-items: center; background: #f1f1f1; }
.vbar .thumb { width: 17px; flex: 1; background: #c1c1c1; margin-bottom: 52px; }
.hbar { display: flex; align-items: center; background: #f1f1f1; }
.hbar .thumb { height: 17px; flex: 1; background: #c1c1c1; margin-right: 26px; }
.corner { background: #dcdcdc; }
.up, .down, .left, .right { border: 5px solid transparent; }
.up { border-top: 0; border-bottom-color: #a3a3a3; margin: 9px 0 7px; }
.down { border-bottom: 0; border-top-color: #505050; margin: 0 0 10px; }
.left { border-left: 0; border-right-color: #a3a3a3; margin: 0 8px; }
.right { border-right: 0; border-left-color: #505050; margin-right: 8px; }

/* Navigation panel */
.sidebar { width: 304px; flex: none; border-right: 4px solid #aaa; background: linear-gradient(90deg, #f3f3f3, #dcdddf); }
.logo { display: block; height: 40px; text-align: center; font: italic 31px/38px "DejaVu Sans", sans-serif; color: #f8980f; -webkit-text-stroke: 1px #f8980f; }
.logo span { color: #6c78af; -webkit-text-stroke-color: #6c78af; }
.quick { display: flex; justify-content: center; gap: 5px; padding: 11px 0 10px; }
.recent { display: flex; gap: 5px; padding-left: 13px; }
.recent button { height: 31px; padding: 0 5px; border: 1px solid #ddd; border-radius: 5px; background: #f2f2f2; color: #444; box-shadow: 0 1px 2px #ccc; }
.treectl { display: flex; justify-content: flex-end; gap: 4px; padding: 6px 29px 3px 0; height: 30px; }
.node { display: flex; align-items: center; height: 29px; padding-left: 5px; }
.tree { padding-left: 6px; }
.open { background: #dcdcdc; }
.node a { margin-left: 5px; }
.line, .rail { width: 25px; height: 29px; background: linear-gradient(#666, #666) 8px 0 / 1px 29px no-repeat; }
.rail { display: flex; align-items: center; background: linear-gradient(#666, #666) 8px 0 / 1px 29px no-repeat, linear-gradient(#666, #666) 8px 14px / 17px 1px no-repeat; }
.rail.first { background: linear-gradient(#666, #666) 8px 14px / 1px 15px no-repeat, linear-gradient(#666, #666) 8px 14px / 17px 1px no-repeat; }
.rail.last { background: linear-gradient(#666, #666) 8px 0 / 1px 14px no-repeat, linear-gradient(#666, #666) 8px 14px / 17px 1px no-repeat; }
.rail button { width: 18px; height: 18px; border: 2px solid #b5b5b5; border-radius: 4px; background: #d0d0d0; color: #666; font-weight: 700; line-height: 12px; font-style: normal; }

/* Main panel */
.main { display: flex; flex-direction: column; flex: 1; min-width: 0; }
.crumbs { display: flex; align-items: center; height: 29px; background: #888; color: #fff; text-shadow: 0 1px 0 #000; }
.crumbs .hide { width: 20px; height: 26px; margin-right: 16px; background: #eee; color: #444; text-shadow: none; }
.crumbs a { margin-left: 5px; }
.crumbs .raquo { margin: 0 10px 0 12px; }
.crumbs .top { margin-left: auto; margin-right: 2px; }
.topmenu { display: flex; height: 45px; background: linear-gradient(#fff, #dcdcdc); border-bottom: 1px solid #ccc; }
.topmenu a { display: flex; align-items: center; gap: 14px; padding: 0 11px 0 14px; border-right: 1px solid #ccc; border-left: 1px solid #fff; color: #235a81; font-weight: 700; text-shadow: 0 1px 0 #fff; }
.topmenu .current { background: #fff; border-color: #fff; margin-bottom: -1px; }
.pagename { margin: 0 8px 0 0; height: 43px; border-bottom: 1px solid #808080; background: #eee; color: #444; font-size: 20px; line-height: 40px; text-align: center; }
.designer { position: relative; flex: 1; background: #fff; display: flex; flex-direction: column; align-items: flex-start; }
.tools { display: flex; flex-direction: column; gap: 5px; padding: 7px 4px; width: 36px; height: 642px; border: 1px solid #808080; background: #eee; }
.tools button { width: 27px; height: 25px; border: 1px dotted #fff; flex: none; }
.tools .on { background: #96f996; border: 1px solid #bbb; }
.console { margin-top: auto; height: 28px; padding: 0 5px 0 9px; gap: 7px; border: 1px solid #aaa; border-width: 1px 1px 0 0; border-radius: 0 3px 0 0; background: #ccc; color: #444; }

/* Entities on the designer canvas */
.ent { position: absolute; border: 1px solid #aaa; border-spacing: 0; background: #fff; white-space: nowrap; table-layout: fixed; }
.ent th { display: flex; height: 27px; padding: 0; font-weight: 400; color: #888; }
.ent th span { flex: 1; line-height: 28px; text-align: center; }
.ent b { color: #000; }
.ent .v { width: 18px; height: 27px; background: linear-gradient(90deg, #58a4f8, #0064e8 30%, #0064e8); color: #fff; font: 700 15px/20px "DejaVu Sans", sans-serif; }
.ent .c { width: 27px; height: 27px; background: linear-gradient(#c9ecfd, #9dd0f6); }
.ent .c svg { width: 16px; height: 16px; }
.ent td { height: 28px; padding: 1px 0 0 22px; }
.ent td svg { float: left; width: 12px; height: 12px; margin: 6px 0 0 -18px; }
.ent tr:nth-child(even) td { background: #dfdfdf; color: #555; }
.roles { left: 74px; top: 57px; width: 158px; }
.family { left: 69px; top: 185px; width: 243px; }
.receipte { left: 181px; top: 419px; width: 242px; }
.allergies { left: 529px; top: 12px; width: 243px; }
.users { left: 441px; top: 195px; width: 222px; }
.country { left: 799px; top: 34px; width: 197px; }
.premissions { left: 716px; top: 282px; width: 292px; }
.appointment { left: 1032px; top: 33px; width: 237px; }
.schedule { left: 1311px; top: 18px; width: 232px; }
.lap { left: 1304px; top: 232px; width: 234px; }
.prescribe { left: 1014px; top: 437px; width: 297px; }
.note { left: 1331px; top: 435px; width: 224px; }

/* Taskbar */
.taskbar { display: grid; grid-template-columns: 1fr auto 1fr; height: 60px; color: #fff; font: 14px/21px "Open Sans", "Noto Sans", sans-serif;
  background: linear-gradient(90deg, #14293f 0, #14293f 17%, #03235f 20%, #04207a 34%, #032a66 40%, #03207a 50%, #03207a 61%, #101f5c 65%, #03207a 69%, #04256a 75%, #14293f 82%, #14293f); }
.apps { grid-column: 2; display: flex; align-items: center; gap: 6px; padding-left: 2px; }
.apps button { position: relative; width: 49px; height: 50px; border-radius: 5px; }
.apps svg { width: 30px; height: 30px; }
.apps .focus { background: #ffffff18; }
.run::after { content: ""; position: absolute; bottom: 1px; left: 50%; width: 8px; height: 4px; margin-left: -4px; border-radius: 2px; background: #9ea6c4; }
.apps .focus::after { width: 20px; margin-left: -10px; background: #4cc2ff; }
.tray { display: flex; align-items: center; justify-content: flex-end; gap: 11px; padding-right: 30px; text-align: center; }
.tray time { padding-right: 8px; }
```
